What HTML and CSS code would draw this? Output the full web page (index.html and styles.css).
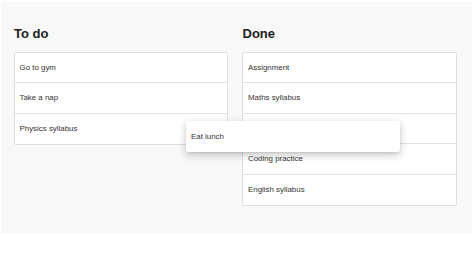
FILE: index.html
```html
<!DOCTYPE html>
<html>
<head>
<meta charset="utf-8">
<link rel="stylesheet" href="styles.css">
</head>
<body>
<div class="board">
  <div class="column">
    <h2 class="title">To do</h2>
    <div class="list">
      <div class="item">Go to gym</div>
      <div class="item">Take a nap</div>
      <div class="item">Physics syllabus</div>
    </div>
  </div>
  <div class="column">
    <h2 class="title">Done</h2>
    <div class="list">
      <div class="item">Assignment</div>
      <div class="item">Maths syllabus</div>
      <div class="item placeholder"></div>
      <div class="item">Coding practice</div>
      <div class="item">English syllabus</div>
    </div>
  </div>
  <div class="item dragging">Eat lunch</div>
</div>
</body>
</html>
```
FILE: styles.css
```css
html, body {
  margin: 0;
  padding: 0;
  background: #ffffff;
  font-family: "Liberation Sans", Arial, sans-serif;
}
.board {
  position: relative;
  margin: 2px 2px 0 1px;
  height: 231px;
  box-sizing: border-box;
  background: #f8f8f8;
  padding: 24px 12.5px 0 12.5px;
  display: flex;
  gap: 14px;
}
.column {
  width: 214.5px;
}
.title {
  margin: 0 0 9.5px 0.5px;
  font-size: 13px;
  line-height: 16px;
  font-weight: bold;
  color: #222;
}
.list {
  background: #fff;
  border: 1px solid #dedede;
  border-radius: 2px;
}
.item {
  height: 30px;
  box-sizing: border-box;
  padding: 0 5px;
  display: flex;
  align-items: center;
  font-size: 7.9px;
  color: #333;
  background: #fff;
  border-bottom: 1px solid #e2e2e2;
}
.list .item {
  height: 30.5px;
}
.list .item:last-child {
  border-bottom: none;
}
.dragging {
  position: absolute;
  left: 185px;
  top: 119px;
  width: 214px;
  height: 31px;
  border: none;
  border-radius: 2px;
  box-shadow: 0 3px 8px rgba(0, 0, 0, 0.22), 0 1px 2px rgba(0, 0, 0, 0.08);
}
```
